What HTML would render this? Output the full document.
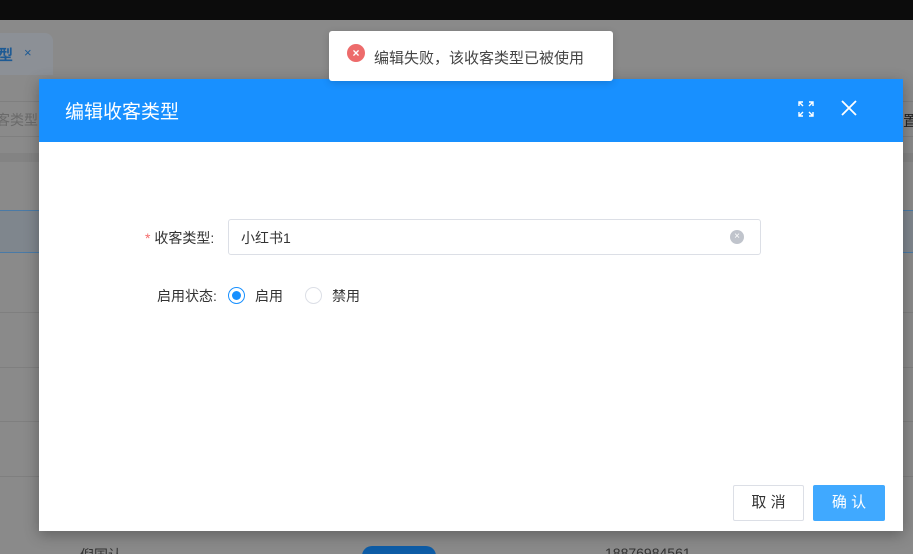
<!DOCTYPE html>
<html style="width:913px;height:554px;overflow:hidden;background:#8a8a8a"><head><meta charset="utf-8"><style>
*{margin:0;padding:0;box-sizing:border-box}
body{width:913px;height:554px;overflow:hidden;background:#8a8a8a;font-family:"Liberation Sans","Noto Sans CJK SC",sans-serif;position:relative}
.abs{position:absolute}
.hl{position:absolute;left:0;width:913px;height:1px;background:#7f7f7f}
</style></head><body>
<div class="abs" style="left:0;top:0;width:913px;height:554px;background:#8a8a8a"></div>
<div class="abs" style="left:0;top:0;width:913px;height:20px;background:#0c0c0c"></div>
<div class="abs" style="left:0;top:33px;width:53px;height:42px;background:#8c9096;border-radius:0 8px 0 0"></div>
<div class="abs" style="left:-2px;top:44px;font-size:15px;color:#1d5a94;font-weight:bold">型</div>
<div class="abs" style="left:24px;top:45px;font-size:13px;color:#1d5a94">×</div>
<div class="hl" style="top:101px"></div><div class="hl" style="top:136px"></div>
<div class="abs" style="left:-4px;top:110px;font-size:14px;color:#6a6a6a">客类型</div>
<div class="abs" style="left:0;top:153px;width:913px;height:9px;background:#838383"></div>
<div class="abs" style="left:0;top:210px;width:913px;height:43px;background:#7f868d;border-top:1px solid #4a7aa6;border-bottom:1px solid #4a7aa6"></div>
<div class="hl" style="top:312px"></div><div class="hl" style="top:367px"></div><div class="hl" style="top:421px"></div><div class="hl" style="top:476px"></div>
<div class="abs" style="left:903px;top:110px;font-size:15px;color:#222">置</div>
<div class="abs" style="left:80px;top:545px;font-size:14px;color:#333">倪国认</div>
<div class="abs" style="left:362px;top:546px;width:74px;height:20px;border-radius:10px;background:#0d5ca6"></div>
<div class="abs" style="left:605px;top:545px;font-size:14px;color:#333">18876984561</div>
<div class="abs" style="left:39px;top:79px;width:864px;height:452px;background:#fff;box-shadow:0 4px 14px rgba(0,0,0,.3)">
 <div style="height:63px;background:#1890ff;position:relative">
  <div class="abs" style="left:26px;top:18px;font-size:19px;color:#fff">编辑收客类型</div>
  <svg class="abs" style="left:759px;top:22px" width="16" height="16" viewBox="0 0 16 16" fill="none" stroke="#fff" stroke-width="1.4"><path d="M1 5V1h4M1 1l4 4M15 5V1h-4M15 1l-4 4M1 11v4h4M1 15l4-4M15 11v4h-4M15 15l-4-4"/></svg>
  <svg class="abs" style="left:802px;top:21px" width="16" height="16" viewBox="0 0 16 16" stroke="#fff" stroke-width="1.8"><path d="M1 1l14 14M15 1L1 15"/></svg>
 </div>
 <div class="abs" style="left:106px;top:149px;font-size:14px;color:#333"><span style="color:#f56c6c">*</span> 收客类型:</div>
 <div class="abs" style="left:189px;top:140px;width:533px;height:36px;border:1px solid #dcdfe6;border-radius:3px">
  <div class="abs" style="left:12px;top:8px;font-size:14px;color:#333">小红书1</div>
  <div class="abs" style="left:501px;top:10px;width:14px;height:14px;border-radius:50%;background:#c0c4cc;color:#fff;font-size:10px;text-align:center;line-height:14px">×</div>
 </div>
 <div class="abs" style="left:118px;top:207px;font-size:14px;color:#333">启用状态:</div>
 <div class="abs" style="left:189px;top:208px;width:17px;height:17px;border-radius:50%;border:1px solid #1890ff"><div style="margin:3px;width:9px;height:9px;border-radius:50%;background:#1890ff"></div></div>
 <div class="abs" style="left:216px;top:207px;font-size:14px;color:#333">启用</div>
 <div class="abs" style="left:266px;top:208px;width:17px;height:17px;border-radius:50%;border:1px solid #dcdfe6"></div>
 <div class="abs" style="left:293px;top:207px;font-size:14px;color:#333">禁用</div>
 <div class="abs" style="left:694px;top:406px;width:71px;height:36px;border:1px solid #dcdfe6;border-radius:2px;font-size:15px;color:#333;text-align:center;line-height:34px">取 消</div>
 <div class="abs" style="left:774px;top:406px;width:72px;height:36px;background:#40a9ff;border-radius:2px;font-size:15px;color:#fff;text-align:center;line-height:36px">确 认</div>
</div>
<div class="abs" style="left:329px;top:31px;width:284px;height:50px;background:#fff;border-radius:3px;box-shadow:0 2px 8px rgba(0,0,0,.15)">
 <div class="abs" style="left:18px;top:13px;width:18px;height:18px;border-radius:50%;background:#ed6b6b;color:#fff;font-size:12px;text-align:center;line-height:18px;font-weight:bold">×</div>
 <div class="abs" style="left:45px;top:16px;font-size:15px;color:#444">编辑失败，该收客类型已被使用</div>
</div>
</body></html>
